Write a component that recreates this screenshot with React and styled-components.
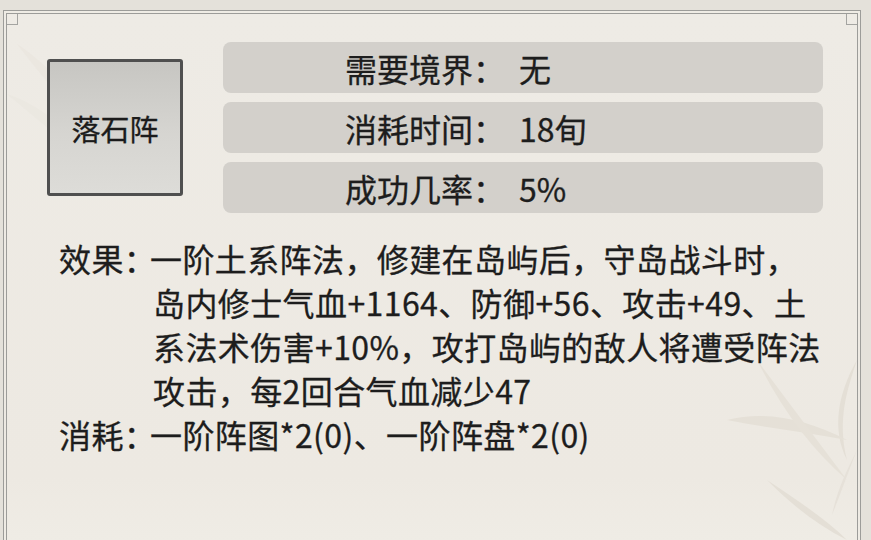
import React from "react";
import styled, { createGlobalStyle } from "styled-components";

const Global = createGlobalStyle`
  html, body { margin: 0; padding: 0; }
  body {
    background: #e4e1da;
    width: 871px;
    height: 540px;
    overflow: hidden;
    font-family: "Noto Sans CJK SC", "Noto Sans", sans-serif;
    color: #1d1d1d;
    -webkit-text-stroke: 0.3px #1d1d1d;
  }
`;

const Page = styled.div`
  width: 871px;
  height: 540px;
  padding: 10px 10px 0 3px;
  box-sizing: border-box;
  display: flex;
`;

const Panel = styled.div`
  position: relative;
  flex: 1;
  border: 4px double #9c9c99;
  border-bottom: none;
  background: linear-gradient(180deg, #eeebe5 0%, #ede9e2 88%, #efece5 100%);
  padding: 28px 34px 0 40px;
  box-sizing: border-box;
  display: flex;
  flex-direction: column;
  overflow: hidden;
`;

const Corner = styled.div`
  position: absolute;
  top: -1px;
  ${(p) => (p.$side === "left" ? "left: -1px;" : "right: -1px;")}
  width: 10px;
  height: 10px;
  border: 1px solid #a4a4a1;
  background: #eeebe5;
`;

const Leaves = styled.svg`
  position: absolute;
  pointer-events: none;
`;

const Top = styled.div`
  display: flex;
  align-items: flex-start;
  gap: 40px;
  position: relative;
`;

const ItemBox = styled.div`
  margin-top: 17px;
  width: 136px;
  height: 137px;
  box-sizing: border-box;
  border: 3px solid #4f4f4f;
  border-radius: 3px;
  background: linear-gradient(180deg, #c7c6c2 0%, #d6d5d1 55%, #dddcd8 100%);
  display: flex;
  align-items: center;
  justify-content: center;
  font-size: 29px;
  color: #1b1b1b;
`;

const Rows = styled.div`
  flex: 1;
  display: flex;
  flex-direction: column;
  gap: 9px;
`;

const InfoRow = styled.div`
  height: 51px;
  border-radius: 8px;
  background: #d3d0cb;
  display: flex;
  align-items: center;
  padding-left: 122px;
  gap: 14px;
  font-size: 32px;
  line-height: 1;
`;

const Label = styled.span``;
const Value = styled.span``;

const Effects = styled.div`
  margin-top: 23px;
  margin-left: 12px;
  display: grid;
  grid-template-columns: 91px 1fr;
  font-size: 32px;
  line-height: 44px;
  letter-spacing: 0.4px;
  position: relative;
`;

const EffLabel = styled.div`
  white-space: nowrap;
`;

const EffLines = styled.div`
  display: flex;
  flex-direction: column;
`;

const Line = styled.div`
  white-space: nowrap;
  padding-left: ${(p) => (p.$indent ? "3px" : "0")};
`;

export default function App() {
  return (
    <>
      <Global />
      <Page>
        <Panel>
          <Corner $side="left" />
          <Corner $side="right" />
          <Leaves
            width="140"
            height="170"
            viewBox="0 0 140 170"
            style={{ left: 0, top: 20 }}
          >
            <path d="M10 10 C40 30 70 60 100 120 C70 80 40 50 10 10 Z" fill="#ebe7e0" />
            <path d="M0 60 C30 70 60 90 90 140 C55 105 30 85 0 60 Z" fill="#ebe8e1" />
          </Leaves>
          <Leaves
            width="160"
            height="200"
            viewBox="0 0 160 200"
            style={{ right: 0, bottom: 0 }}
          >
            <path d="M160 20 C150 50 140 80 150 120 C135 90 140 55 160 20 Z" fill="#e4dfd6" />
            <path d="M30 80 C70 70 110 80 150 100 C110 92 70 88 30 80 Z" fill="#e5e0d7" />
            <path d="M60 20 C90 60 120 100 150 140 C115 110 85 70 60 20 Z" fill="#e6e1d8" />
            <path d="M70 140 C100 160 130 180 150 200 C120 185 95 165 70 140 Z" fill="#e4dfd6" />
            <path d="M160 110 C150 130 140 150 135 175 C145 150 152 130 160 110 Z" fill="#e6e1d9" />
          </Leaves>
          <Top>
            <ItemBox>落石阵</ItemBox>
            <Rows>
              <InfoRow>
                <Label>需要境界：</Label>
                <Value>无</Value>
              </InfoRow>
              <InfoRow>
                <Label>消耗时间：</Label>
                <Value>18旬</Value>
              </InfoRow>
              <InfoRow>
                <Label>成功几率：</Label>
                <Value>5%</Value>
              </InfoRow>
            </Rows>
          </Top>
          <Effects>
            <EffLabel>效果：</EffLabel>
            <EffLines>
              <Line>一阶土系阵法，修建在岛屿后，守岛战斗时，</Line>
              <Line $indent>岛内修士气血+1164、防御+56、攻击+49、土</Line>
              <Line $indent>系法术伤害+10%，攻打岛屿的敌人将遭受阵法</Line>
              <Line $indent>攻击，每2回合气血减少47</Line>
            </EffLines>
            <EffLabel>消耗：</EffLabel>
            <EffLines>
              <Line>一阶阵图*2(0)、一阶阵盘*2(0)</Line>
            </EffLines>
          </Effects>
        </Panel>
      </Page>
    </>
  );
}
